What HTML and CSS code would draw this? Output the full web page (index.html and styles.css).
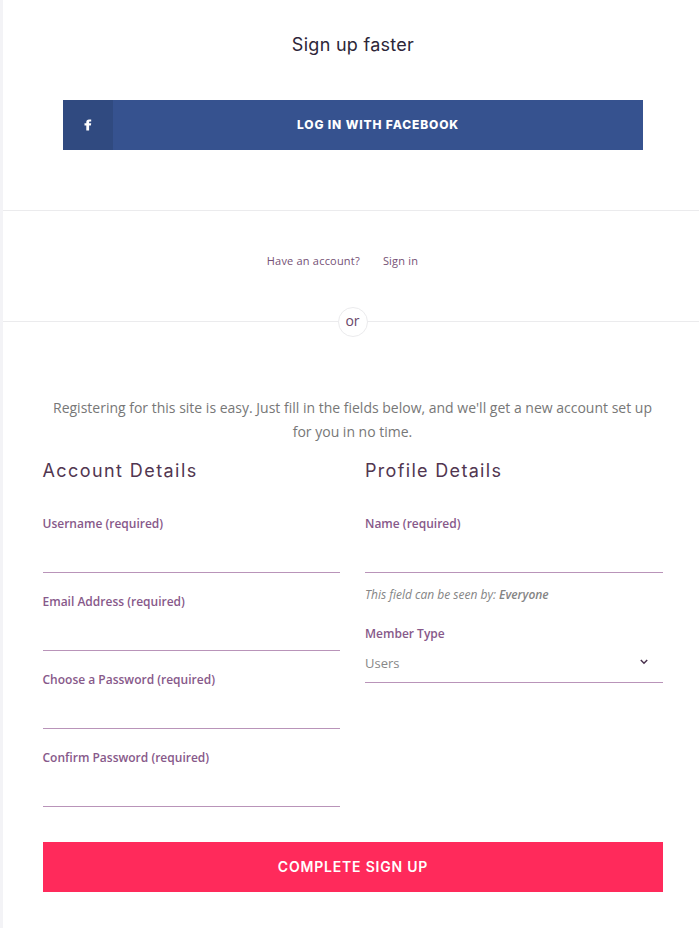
FILE: index.html
```html
<!DOCTYPE html>
<html lang="en">
<head>
<meta charset="utf-8">
<title>Sign up</title>
<link rel="stylesheet" href="styles.css">
</head>
<body>
<main class="page">
  <section class="social">
    <h2 class="social-title"><span>Sign up faster</span></h2>
    <a class="facebook">
      <span class="facebook-icon"><svg width="8" height="12" viewBox="0 0 8 12"><path d="M7.200 .4v2.100H6c-.7 0-.9.3-.9.9v.9h2.100L6.900 6.500H5.100V11.500H2.300V6.500H.5V4.300h1.800V3C2.300 1.300 3.400.4 5 .4z" fill="#fff"/></svg></span>
      <span class="facebook-label"><span>LOG IN WITH FACEBOOK</span></span>
    </a>
  </section>
  <section class="signin">
    <span>Have an account?</span>
    <a>Sign in</a>
  </section>
  <div class="divider"><span class="divider-text">or</span></div>
  <form class="register">
    <p class="intro">Registering for this site is easy. Just fill in the fields below, and we'll get a new account set up for you in no time.</p>
    <div class="columns">
      <div class="column">
        <h4 class="account-title">Account Details</h4>
        <div class="field"><label for="user">Username (required)</label><input id="user" type="text"></div>
        <div class="field"><label for="email">Email Address (required)</label><input id="email" type="text"></div>
        <div class="field"><label for="pass">Choose a Password (required)</label><input id="pass" type="password"></div>
        <div class="field"><label for="confirm">Confirm Password (required)</label><input id="confirm" type="password"></div>
      </div>
      <div class="column">
        <h4>Profile Details</h4>
        <div class="field"><label for="name">Name (required)</label><input id="name" type="text"></div>
        <p class="visibility">This field can be seen by: <b>Everyone</b></p>
        <div class="field"><label>Member Type</label>
          <div class="select"><span>Users</span><svg width="8" height="6" viewBox="0 0 8 6"><path d="M.8 1 4 4.200 7.200 1" fill="none" stroke="#49304d" stroke-width="1.500"/></svg></div>
        </div>
      </div>
    </div>
    <button class="submit" type="button"><span>COMPLETE SIGN UP</span></button>
  </form>
</main>
</body>
</html>
```
FILE: styles.css
```css
* { box-sizing: border-box; }
body { margin: 0; background: #fff; font-family: "Open Sans", sans-serif; color: #777; }
.page { height: 928px; border-left: 3px solid #f3f3f6; }
.social { height: 211px; padding: 30px 56px 0 60px; border-bottom: 1px solid #ebebed; }
.social-title { margin: 0 0 40px; font: 400 18px/30px Inter, sans-serif; letter-spacing: 0.28px; color: #2d2638; text-align: center; }
.facebook { display: flex; height: 50px; background: #36528f; color: #fff; }
.facebook-icon { width: 50px; display: flex; align-items: center; justify-content: center; background: #304a80; }
.facebook-label { flex: 1; text-align: center; font: 800 12px/50px Inter, sans-serif; letter-spacing: 0.87px; }
.signin { height: 110px; padding: 40px 17px 0 0; display: flex; justify-content: center; gap: 23px; font-size: 11px; line-height: 20px; letter-spacing: 0.2px; color: #755175; }
.divider { height: 1px; background: #ebebed; display: flex; align-items: center; justify-content: center; padding-left: 4px; }
.divider-text { flex: none; width: 30px; height: 30px; border: 1px solid #ebebed; border-radius: 50%; background: #fff; padding-right: 1px; text-align: center; font-size: 14px; line-height: 26px; color: #694769; }
.register { padding: 74px 36px 0 40px; }
.intro { margin: 0; padding-right: 1px; font-size: 14px; line-height: 24px; text-align: center; }
.columns { display: grid; grid-template-columns: 297px 298px; gap: 25px; height: 398px; }
h4 { margin: 12px 0 26px; font: 400 18px/30px Inter, sans-serif; letter-spacing: 1.32px; color: #513650; }
.account-title { letter-spacing: 1.42px; text-indent: -0.5px; }
.field { height: 78px; }
.field label { display: block; font-size: 12px; line-height: 24px; font-weight: 600; color: #87598a; }
.column:first-child label { text-indent: -0.5px; }
.field input { display: block; width: 100%; height: 37px; border: 0; border-bottom: 1px solid #b994b9; padding: 0; background: none; }
.visibility { margin: -7px 0 15px; font-size: 12px; line-height: 24px; font-style: italic; color: #858585; }
.visibility b { font-weight: 600; }
.select { display: flex; justify-content: space-between; height: 37px; padding-right: 15px; border-bottom: 1px solid #b994b9; font-size: 13px; line-height: 35px; color: #888; }
.select svg { margin-top: 13px; }
.submit { display: block; width: 620px; height: 50px; border: 0; padding: 0; background: #ff2a5b; color: #fff; font: 600 14px/50px Inter, sans-serif; letter-spacing: 0.8px; }
```
